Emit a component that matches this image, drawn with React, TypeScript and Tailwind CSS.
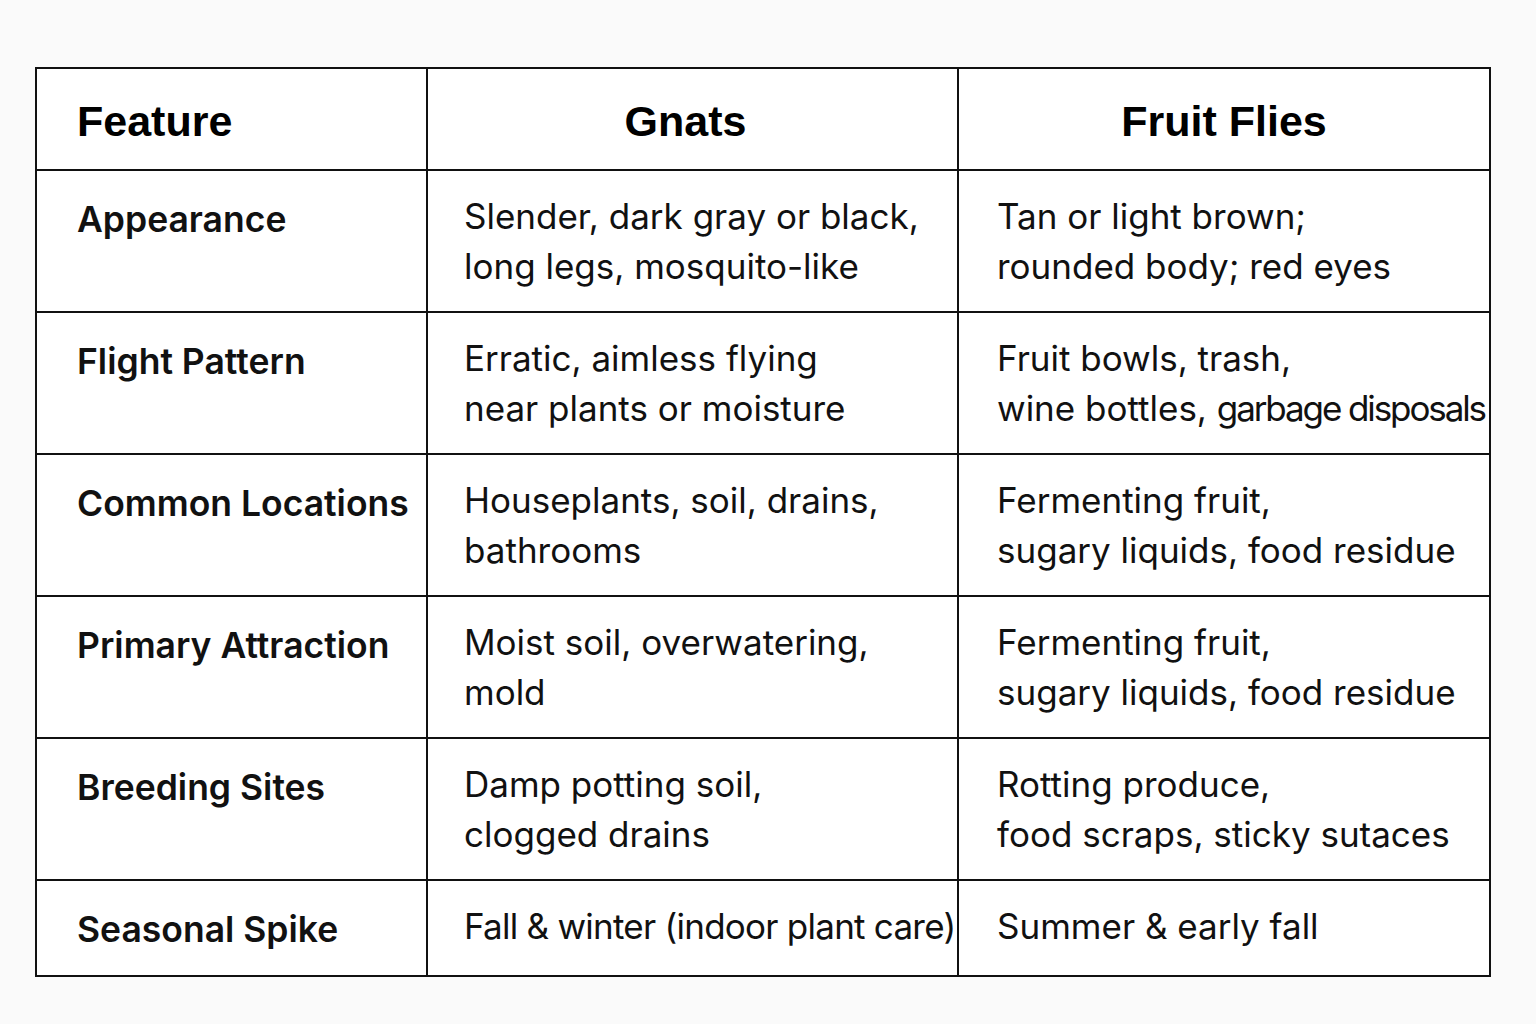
import React from "react";

type Line = string | { t: string; tight: string };

const rows: { label: string; a: Line[][]; b: Line[][] }[] = [
  { label: "Appearance", a: [["Slender, dark gray or black,"], ["long legs, mosquito-like"]], b: [["Tan or light brown;"], ["rounded body; red eyes"]] },
  { label: "Flight Pattern", a: [["Erratic, aimless flying"], ["near plants or moisture"]], b: [["Fruit bowls, trash,"], ["wine bottles, ", { t: "garbage disposals", tight: "tracking-[-2.1px]" }]] },
  { label: "Common Locations", a: [["Houseplants, soil, drains,"], ["bathrooms"]], b: [["Fermenting fruit,"], ["sugary liquids, food residue"]] },
  { label: "Primary Attraction", a: [["Moist soil, overwatering,"], ["mold"]], b: [["Fermenting fruit,"], ["sugary liquids, food residue"]] },
  { label: "Breeding Sites", a: [["Damp potting soil,"], ["clogged drains"]], b: [["Rotting produce,"], ["food scraps, sticky sutaces"]] },
  { label: "Seasonal Spike", a: [[{ t: "Fall & winter (indoor plant care)", tight: "tracking-[-0.75px]" }]], b: [["Summer & early fall"]] },
];

const body = { fontFamily: "Inter, 'Noto Sans', sans-serif" } as React.CSSProperties;
const head = { fontFamily: "'Liberation Sans', Arial, sans-serif" } as React.CSSProperties;

function Lines({ lines }: { lines: Line[][] }) {
  return (
    <div className="text-[35px] leading-[50px] text-[#111] whitespace-nowrap" style={body}>
      {lines.map((l, i) => (
        <div key={i}>
          {l.map((p, j) =>
            typeof p === "string" ? (
              <span key={j}>{p}</span>
            ) : (
              <span key={j} className={p.tight}>
                {p.t}
              </span>
            )
          )}
        </div>
      ))}
    </div>
  );
}

export default function App() {
  return (
    <div className="w-[1536px] h-[1024px] bg-[#fafafa] pt-[67px] pl-[35px]">
      <div className="w-[1456px] border-2 border-[#111] bg-white grid grid-cols-[391px_531px_530px]">
        <div className="h-[102px] border-b-2 border-r-2 border-[#111] pl-[40px] pt-[4px] flex items-center">
          <span className="text-[43px] font-bold text-black" style={head}>Feature</span>
        </div>
        <div className="h-[102px] border-b-2 border-r-2 border-[#111] pt-[4px] flex items-center justify-center pr-[14px]">
          <span className="text-[43px] font-bold text-black" style={head}>Gnats</span>
        </div>
        <div className="h-[102px] border-b-2 border-[#111] pt-[4px] flex items-center justify-center">
          <span className="text-[43px] font-bold text-black" style={head}>Fruit Flies</span>
        </div>
        {rows.map((r, i) => {
          const last = i === rows.length - 1;
          const h = last ? "h-[94px]" : "h-[142px]";
          const bb = last ? "" : "border-b-2";
          return (
            <React.Fragment key={r.label}>
              <div className={`${h} ${bb} border-r-2 border-[#111] pl-[40px] pt-[24px]`}>
                <div className="text-[35.5px] leading-[50px] font-semibold text-[#111] whitespace-nowrap" style={body}>
                  {r.label}
                </div>
              </div>
              <div className={`${h} ${bb} border-r-2 border-[#111] pl-[36px] pt-[20px]`}>
                <Lines lines={r.a} />
              </div>
              <div className={`${h} ${bb} border-[#111] pl-[38px] pt-[20px]`}>
                <Lines lines={r.b} />
              </div>
            </React.Fragment>
          );
        })}
      </div>
    </div>
  );
}
